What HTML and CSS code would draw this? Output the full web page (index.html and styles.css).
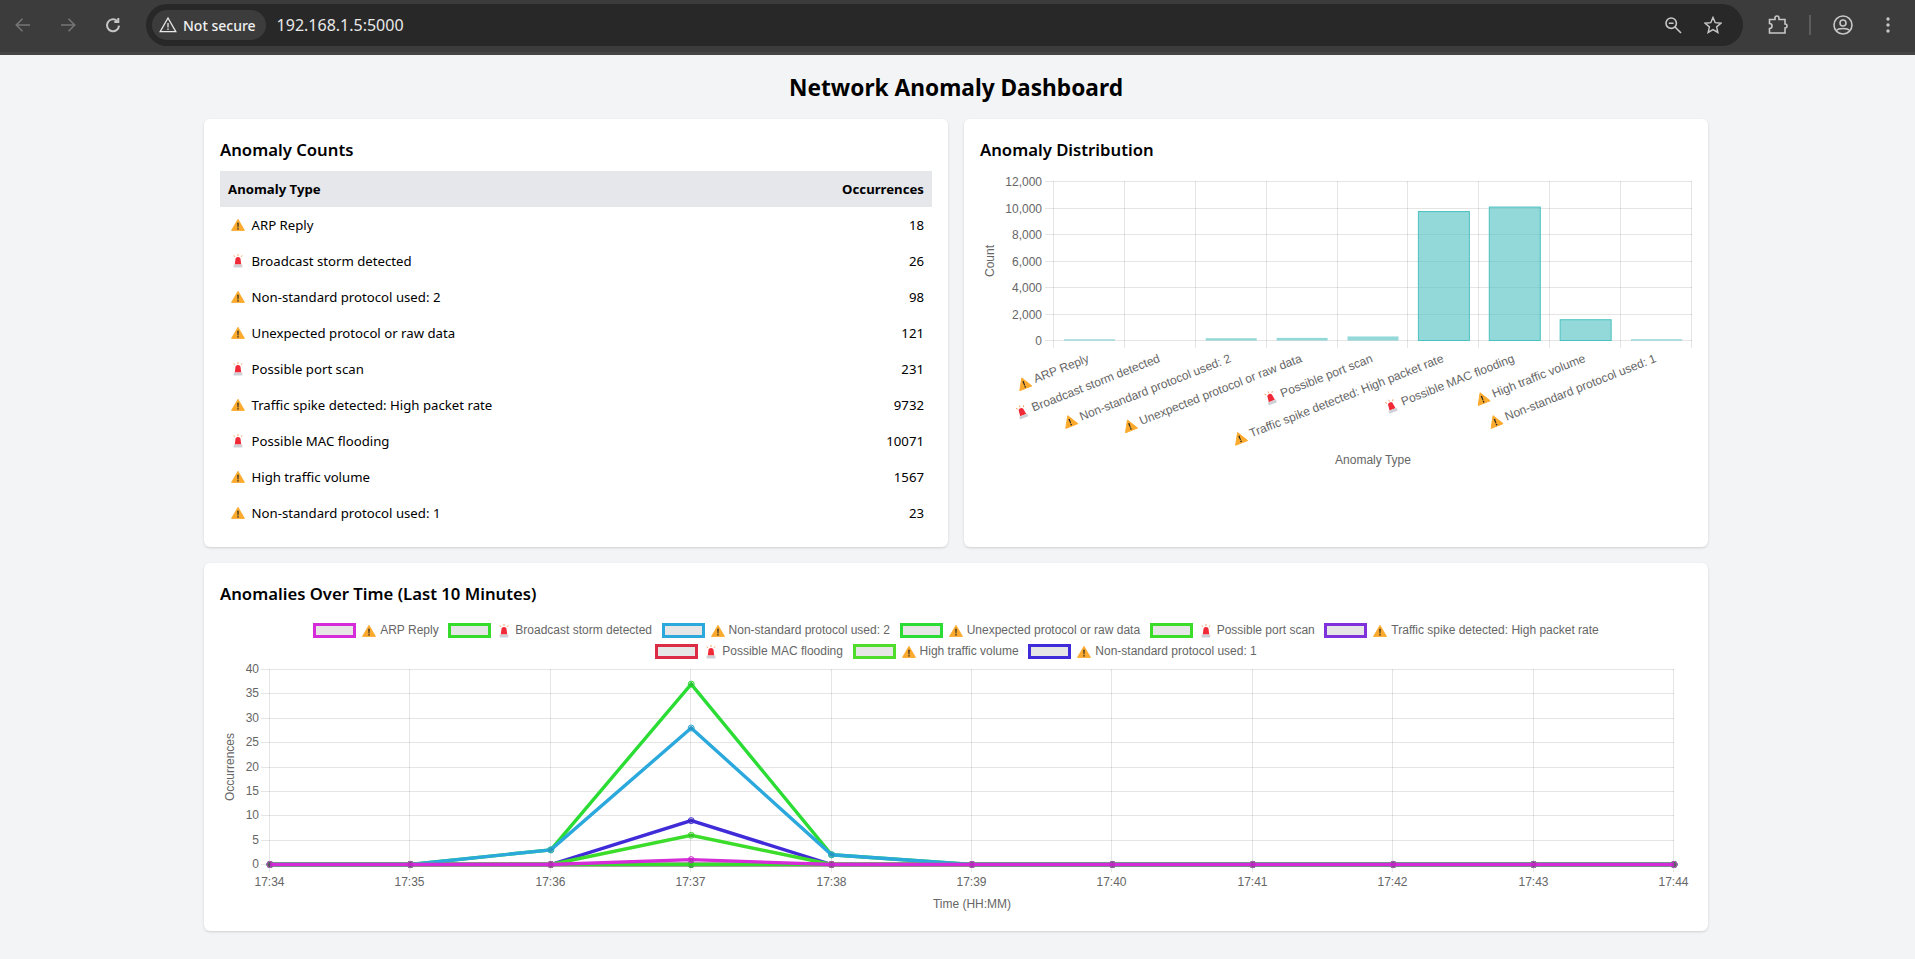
FILE: index.html
```html
<!DOCTYPE html>
<html lang="en">
  <head>
    <meta charset="UTF-8" />
    <meta name="viewport" content="width=device-width, initial-scale=1.0" />
    <title>Network Anomaly Dashboard</title>
    <link rel="stylesheet" href="styles.css">
  </head>
  <body>
    <!-- Shared emoji-like icons -->
    <svg class="icon-defs">
      <symbol id="warn" viewBox="0 0 16 16">
        <path d="M8 1.5 15.4 14.2H.6Z" fill="#fbaa2d" stroke="#fbaa2d" stroke-linejoin="round" />
        <path d="M7.2 5.5h1.6L8.5 10.8h-1ZM7.2 11.6h1.6v1.6H7.2Z" fill="#222" />
      </symbol>
      <symbol id="siren" viewBox="0 0 16 16">
        <path d="M8 0v2.4M3.2 1.6 4.6 3.4M12.8 1.6 11.4 3.4" stroke="#f5a05a" stroke-width="1" fill="none" />
        <path d="M4.300 12 5 6.500a3 3 0 0 1 6 0L11.700 12Z" fill="#f02b37" />
        <rect x="3" y="12" width="10" height="3.4" fill="#cfd0d6" />
      </symbol>
    </svg>

    <!-- Browser toolbar -->
    <header class="toolbar">
      <div class="nav-btn dim">
        <svg viewBox="0 0 16 16" class="tool-icon"><path d="M15 8H1.5M7.5 1.8 1.3 8l6.2 6.2" /></svg>
      </div>
      <div class="nav-btn dim">
        <svg viewBox="0 0 16 16" class="tool-icon"><path d="M1 8h13.5M8.5 1.8 14.7 8l-6.2 6.2" /></svg>
      </div>
      <div class="nav-btn">
        <svg viewBox="0 0 16 16" class="tool-icon reload"><path d="M14 8.6A6 6 0 1 1 11.900 3.700M13.300 1v4H9.300" /></svg>
      </div>
      <div class="address-bar">
        <div class="security-chip">
          <svg viewBox="0 0 18 18" class="chip-icon"><path d="M9 2 16.8 15.6H1.2Z" /><path d="M9 7v4.4M9 12.6v1.4" /></svg>
          <span>Not secure</span>
        </div>
        <span class="url">192.168.1.5:5000</span>
        <div class="address-actions">
          <svg viewBox="0 0 18 18" class="tool-icon"><circle cx="7.2" cy="7.2" r="5.2" /><path d="M11 11l6 6M4.8 7.2h4.8" /></svg>
          <svg viewBox="0 0 20 20" class="tool-icon"><path d="M10 1.6 12.5 7.4 18.8 8 14 12.1 15.4 18.3 10 15.1 4.6 18.3 6 12.1 1.2 8 7.5 7.4Z" /></svg>
        </div>
      </div>
      <div class="toolbar-end">
        <div class="nav-btn">
          <svg viewBox="0 0 20 20" class="tool-icon large"><path d="M1.5 4.5H7V3a2 2 0 0 1 4 0v1.500h6V9a2 2 0 0 1 0 4v5H1.500v-4.500a2.500 2.500 0 0 0 0-5Z" /></svg>
        </div>
        <div class="toolbar-divider"></div>
        <div class="nav-btn">
          <svg viewBox="0 0 20 20" class="tool-icon large"><circle cx="10" cy="10" r="9" /><circle cx="10" cy="8" r="3" /><path d="M3.600 15.500C5 12.800 15 12.800 16.400 15.500" /></svg>
        </div>
        <div class="nav-btn">
          <svg viewBox="0 0 4 16" class="dots-icon"><circle cx="2" cy="2" r="1.700" /><circle cx="2" cy="8" r="1.700" /><circle cx="2" cy="14" r="1.700" /></svg>
        </div>
      </div>
    </header>

    <main class="dashboard">
      <h1 class="page-title">Network Anomaly Dashboard</h1>

      <div class="card-grid">
        <!-- Counts table -->
        <section class="card">
          <h2 class="card-title">Anomaly Counts</h2>
          <table class="counts">
            <thead>
              <tr><th>Anomaly Type</th><th class="num">Occurrences</th></tr>
            </thead>
            <tbody>
              <tr><td><svg class="emoji"><use href="#warn" /></svg>ARP Reply</td><td class="num">18</td></tr>
              <tr><td><svg class="emoji"><use href="#siren" /></svg>Broadcast storm detected</td><td class="num">26</td></tr>
              <tr><td><svg class="emoji"><use href="#warn" /></svg>Non-standard protocol used: 2</td><td class="num">98</td></tr>
              <tr><td><svg class="emoji"><use href="#warn" /></svg>Unexpected protocol or raw data</td><td class="num">121</td></tr>
              <tr><td><svg class="emoji"><use href="#siren" /></svg>Possible port scan</td><td class="num">231</td></tr>
              <tr><td><svg class="emoji"><use href="#warn" /></svg>Traffic spike detected: High packet rate</td><td class="num">9732</td></tr>
              <tr><td><svg class="emoji"><use href="#siren" /></svg>Possible MAC flooding</td><td class="num">10071</td></tr>
              <tr><td><svg class="emoji"><use href="#warn" /></svg>High traffic volume</td><td class="num">1567</td></tr>
              <tr><td><svg class="emoji"><use href="#warn" /></svg>Non-standard protocol used: 1</td><td class="num">23</td></tr>
            </tbody>
          </table>
        </section>

        <!-- Bar chart -->
        <section class="card">
          <h2 class="card-title">Anomaly Distribution</h2>
          <svg id="barChart" class="chart" width="712" height="360"></svg>
        </section>

        <!-- Line chart -->
        <section class="card wide">
          <h2 class="card-title">Anomalies Over Time (Last 10 Minutes)</h2>
          <div id="legend" class="legend"></div>
          <svg id="lineChart" class="chart" width="1472" height="256"></svg>
        </section>
      </div>
    </main>

    <script src="charts.js"></script>
  </body>
</html>
```

FILE: styles.css
```css
* {
  margin: 0;
  padding: 0;
  box-sizing: border-box;
}

body {
  font-family: "Noto Sans", "Open Sans", sans-serif;
  background-color: #f3f4f6;
  color: #000;
  min-height: 100vh;
}

.icon-defs {
  display: none;
}

/* Browser toolbar */
.toolbar {
  display: flex;
  align-items: center;
  height: 55px;
  background-color: #3c3c3c;
  padding-bottom: 2px;
  border-bottom: 3px solid #454545;
}

.nav-btn {
  display: flex;
  justify-content: center;
  align-items: center;
  width: 45px;
  height: 42px;
  flex-shrink: 0;
  color: #c7c7c7;
}

.nav-btn.dim {
  color: #757575;
}

.tool-icon {
  width: 16px;
  height: 16px;
  fill: none;
  stroke: currentColor;
  stroke-width: 1.6;
}

.tool-icon.reload {
  stroke-width: 2;
}

.tool-icon.large {
  width: 20px;
  height: 20px;
}

.dots-icon {
  width: 4px;
  height: 16px;
  fill: currentColor;
}

.address-bar {
  display: flex;
  align-items: center;
  flex: 1;
  height: 42px;
  margin: 0 12px 0 11px;
  padding-left: 6px;
  border-radius: 21px;
  background-color: #282828;
}

.security-chip {
  display: flex;
  align-items: center;
  gap: 6px;
  height: 30px;
  padding: 0 10px 0 7px;
  border-radius: 15px;
  background-color: #3c3c3c;
  color: #f0f0f0;
  font-size: 14px;
  font-weight: 500;
  white-space: nowrap;
}

.chip-icon {
  width: 18px;
  height: 18px;
  fill: none;
  stroke: #e6e6e6;
  stroke-width: 1.3;
}

.url {
  margin-left: 11px;
  color: #e8e8e8;
  font-size: 16px;
}

.address-actions {
  display: flex;
  align-items: center;
  gap: 22px;
  margin-left: auto;
  padding-right: 21px;
  color: #c7c7c7;
}

.address-actions .tool-icon {
  width: 18px;
  height: 18px;
}

.toolbar-end {
  display: flex;
  align-items: center;
  width: 160px;
  flex-shrink: 0;
}

.toolbar-divider {
  width: 2px;
  height: 20px;
  margin: 0 9px;
  background-color: #5c5c5c;
  flex-shrink: 0;
}

/* Page */
.dashboard {
  width: 1504px;
  margin-left: 204px;
  padding: 16px 0;
}

.page-title {
  font-size: 22.7px;
  line-height: 32px;
  font-weight: 700;
  text-align: center;
  padding-top: 1px;
  margin-bottom: 15px;
}

.card-grid {
  display: grid;
  grid-template-columns: 1fr 1fr;
  gap: 16px;
}

.card {
  background-color: #fff;
  border-radius: 6px;
  padding: 16px;
  box-shadow: 0 1px 3px rgba(0, 0, 0, 0.1), 0 1px 2px rgba(0, 0, 0, 0.06);
}

.card.wide {
  grid-column: span 2;
}

.card-title {
  font-size: 16.7px;
  line-height: 28px;
  font-weight: 600;
  padding-top: 1px;
  margin-bottom: 7px;
}

/* Counts table */
.counts {
  width: 100%;
  border-collapse: collapse;
  font-size: 13.2px;
  line-height: 20px;
}

.counts th {
  padding: 8px;
  text-align: left;
  font-weight: 700;
  background-color: #e5e7eb;
}

.counts td {
  padding: 8px;
}

.counts .num {
  text-align: right;
}

.emoji {
  width: 14px;
  height: 14px;
  margin: 0 7px 0 2.5px;
  vertical-align: -2px;
}

/* Charts */
.chart {
  display: block;
}

.chart text {
  font-family: "Liberation Sans", Arial, sans-serif;
  font-size: 12px;
  fill: #666;
}

.grid-line {
  stroke: rgba(0, 0, 0, 0.1);
  stroke-width: 1;
}

.bar {
  fill: rgba(75, 192, 192, 0.6);
  stroke: rgb(75, 192, 192);
  stroke-width: 1;
}

.bar.tiny {
  stroke: none;
}

.series-line {
  fill: none;
  stroke-width: 3.4;
}

.series-point {
  fill: rgba(0, 0, 0, 0.1);
  stroke-width: 1;
}

.legend {
  display: flex;
  flex-wrap: wrap;
  justify-content: center;
  gap: 6px 9.6px;
  height: 44px;
  padding-top: 8px;
  font-family: "Liberation Sans", Arial, sans-serif;
  font-size: 12px;
  line-height: 15px;
  color: #666;
}

.legend-item {
  display: flex;
  align-items: center;
  white-space: nowrap;
}

.legend-box {
  width: 43px;
  height: 15px;
  margin-right: 6px;
  border: 3px solid;
  background-color: #e6e6e6;
}

.legend-emoji {
  width: 14px;
  height: 14px;
  margin-right: 4px;
}
```

FILE: charts.js
```js
// Anomaly data shown by both charts (bar is the height plotted in the distribution chart)
const series = [
  { label: "ARP Reply", icon: "warn", bar: 18, color: "#d62bd8", values: { 3: 1 } },
  { label: "Broadcast storm detected", icon: "siren", bar: 0, color: "#35dc2b", values: {} },
  { label: "Non-standard protocol used: 2", icon: "warn", bar: 98, color: "#2ba8dc", values: { 2: 3, 3: 28, 4: 2 } },
  { label: "Unexpected protocol or raw data", icon: "warn", bar: 121, color: "#2bdc35", values: { 2: 3, 3: 37, 4: 2 } },
  { label: "Possible port scan", icon: "siren", bar: 231, color: "#3cdc2b", values: { 3: 6 } },
  { label: "Traffic spike detected: High packet rate", icon: "warn", bar: 9732, color: "#7f32dc", values: {} },
  { label: "Possible MAC flooding", icon: "siren", bar: 10071, color: "#dc2b45", values: {} },
  { label: "High traffic volume", icon: "warn", bar: 1567, color: "#4fdc2b", values: {} },
  { label: "Non-standard protocol used: 1", icon: "warn", bar: 23, color: "#402bd8", values: { 3: 9 } }
];

const SVG_NS = "http://www.w3.org/2000/svg";

function add(parent, name, attrs, text) {
  const node = document.createElementNS(SVG_NS, name);
  for (const key in attrs) node.setAttribute(key, attrs[key]);
  if (text !== undefined) node.textContent = text;
  parent.appendChild(node);
  return node;
}

function gridLine(svg, x1, y1, x2, y2) {
  add(svg, "line", { class: "grid-line", x1, y1, x2, y2 });
}

// Bar chart
function drawBarChart() {
  const svg = document.getElementById("barChart");
  const left = 74, right = 712, top = 10, bottom = 169;
  const step = (right - left) / series.length;

  for (let i = 0; i <= 6; i++) {
    const y = Math.round(bottom - (i * (bottom - top)) / 6) + 0.5;
    gridLine(svg, 65, y, right, y);
    add(svg, "text", { x: 62, y: y + 4, "text-anchor": "end" }, (i * 2000).toLocaleString("en-US"));
  }
  for (let i = 0; i <= series.length; i++) {
    const x = Math.round(left + i * step) - 0.5;
    gridLine(svg, x, top, x, bottom + 8);
  }

  series.forEach((item, i) => {
    const center = left + (i + 0.5) * step;
    const height = (item.bar * (bottom - top)) / 12000;
    if (height > 0) {
      const tiny = height < 4;
      add(svg, "rect", {
        class: tiny ? "bar tiny" : "bar",
        x: center - 25.5,
        y: bottom + 0.5 - height - (tiny ? 1 : 0),
        width: 51,
        height: tiny ? height + 1 : height
      });
    }

    const label = add(svg, "g", { transform: `translate(${center + 0.5} 190.5) rotate(-21.5)` });
    const text = add(label, "text", { x: 0, y: 0, "text-anchor": "end" }, item.label);
    add(label, "use", {
      href: "#" + item.icon,
      x: -text.getComputedTextLength() - 18,
      y: -11,
      width: 14,
      height: 14
    });
  });

  add(svg, "text", { transform: "translate(14 90) rotate(-90)", "text-anchor": "middle" }, "Count");
  add(svg, "text", { x: 393, y: 293, "text-anchor": "middle" }, "Anomaly Type");
}

// Legend above the line chart
function drawLegend() {
  const legend = document.getElementById("legend");
  series.forEach((item) => {
    const row = document.createElement("div");
    row.className = "legend-item";

    const box = document.createElement("span");
    box.className = "legend-box";
    box.style.borderColor = item.color;
    row.appendChild(box);

    const icon = add(row, "svg", { class: "legend-emoji" });
    add(icon, "use", { href: "#" + item.icon });

    row.appendChild(document.createTextNode(item.label));
    legend.appendChild(row);
  });
}

// Line chart
function drawLineChart() {
  const svg = document.getElementById("lineChart");
  const left = 50, step = 140.4, top = 10, bottom = 205;
  const points = 11;
  const unit = (bottom - top) / 40;

  for (let i = 0; i <= 8; i++) {
    const y = Math.round(bottom - i * 5 * unit) + 0.5;
    gridLine(svg, 41, y, left + step * 10, y);
    add(svg, "text", { x: 39, y: y + 3, "text-anchor": "end" }, i * 5);
  }
  for (let i = 0; i < points; i++) {
    const x = Math.round(left + i * step) - 0.5;
    gridLine(svg, x, top, x, bottom + 8);
    add(svg, "text", { x, y: 227, "text-anchor": "middle" }, "17:" + (34 + i));
  }

  add(svg, "text", { transform: "translate(14 108) rotate(-90)", "text-anchor": "middle" }, "Occurrences");
  add(svg, "text", { x: 752, y: 249, "text-anchor": "middle" }, "Time (HH:MM)");

  // The first series ends up on top
  [...series].reverse().forEach((item) => {
    const coords = [];
    for (let i = 0; i < points; i++) {
      coords.push([left + i * step, bottom + 0.5 - (item.values[i] || 0) * unit]);
    }
    add(svg, "polyline", {
      class: "series-line",
      points: coords.map((c) => c.join(",")).join(" "),
      stroke: item.color
    });
    coords.forEach(([cx, cy]) => {
      add(svg, "circle", { class: "series-point", cx, cy, r: 3, stroke: item.color });
    });
  });
}

drawBarChart();
drawLegend();
drawLineChart();
```
